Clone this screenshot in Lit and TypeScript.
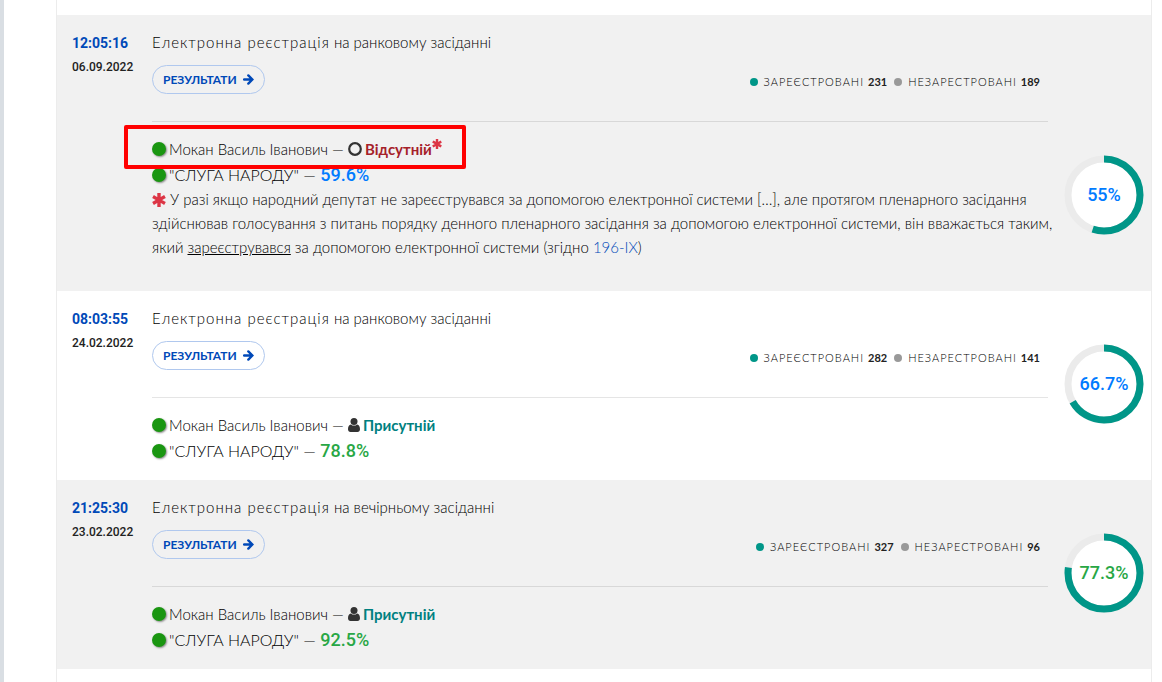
import { LitElement, html, css, svg, nothing } from "lit";
import { customElement, property } from "lit/decorators.js";

interface Session {
  time: string;
  date: string;
  when: string;
  registered: number;
  unregistered: number;
  present: boolean;
  faction: string;
  factionTone: "blue" | "green";
  total: number;
  totalTone: "blue" | "green";
  shaded: boolean;
}

const sessions: Session[] = [
  { time: "12:05:16", date: "06.09.2022", when: "на ранковому засіданні", registered: 231, unregistered: 189, present: false, faction: "59.6%", factionTone: "blue", total: 55, totalTone: "blue", shaded: true },
  { time: "08:03:55", date: "24.02.2022", when: "на ранковому засіданні", registered: 282, unregistered: 141, present: true, faction: "78.8%", factionTone: "green", total: 66.7, totalTone: "blue", shaded: false },
  { time: "21:25:30", date: "23.02.2022", when: "на вечірньому засіданні", registered: 327, unregistered: 96, present: true, faction: "92.5%", factionTone: "green", total: 77.3, totalTone: "green", shaded: true },
];

const asterisk = html`<svg class="asterisk" viewBox="0 0 14 14" aria-hidden="true">
  <path d="M7 1.8V12.2M2.5 4.4L11.5 9.6M11.5 4.4L2.5 9.6" fill="none" stroke="currentColor" stroke-width="3.4" stroke-linecap="square" />
</svg>`;

const arrow = html`<svg class="arrow" viewBox="0 0 12 12" aria-hidden="true">
  <path d="M1.2 6H9.6M5.8 1.6L10.2 6L5.8 10.4" fill="none" stroke="currentColor" stroke-width="2.6" stroke-linecap="round" />
</svg>`;

const person = html`<svg class="person" viewBox="0 0 12 14" aria-hidden="true">
  <circle cx="6" cy="3.6" r="3.5" />
  <path d="M2.9 6.4C1 6.7 0 8.6 0 11.3C0 12.9 1 14 2.5 14H9.5C11 14 12 12.9 12 11.3C12 8.6 11 6.7 9.1 6.4C7.4 8 4.6 8 2.9 6.4Z" />
</svg>`;

const ringIcon = html`<svg class="hollow" viewBox="0 0 14 14" aria-hidden="true">
  <circle cx="7" cy="7" r="5.8" fill="none" stroke="currentColor" stroke-width="2.2" />
</svg>`;

@customElement("percent-ring")
export class PercentRing extends LitElement {
  @property({ type: Number }) value = 0;
  @property() tone = "blue";

  static styles = css`
    :host { display: grid; width: 80px; height: 80px; place-items: center; }
    .dial, .label { grid-area: 1 / 1; }
    .dial { width: 80px; height: 80px; display: block; }
    .label { font: 500 18px/24px Roboto, sans-serif; color: #007bff; }
    .green { color: #28a745; }
  `;

  render() {
    const length = 2 * Math.PI * 36;
    return html`
      <svg class="dial" viewBox="0 0 80 80" aria-hidden="true">
        ${svg`
          <circle cx="40" cy="40" r="36" fill="#fff" stroke="#ebebeb" stroke-width="7" />
          <circle cx="40" cy="40" r="36" fill="none" stroke="#009688" stroke-width="7"
            stroke-dasharray="${(length * this.value) / 100} ${length}" transform="rotate(-90 40 40)" />`}
      </svg>
      <span class="label ${this.tone}">${this.value}%</span>
    `;
  }
}

@customElement("app-root")
export class AppRoot extends LitElement {
  static styles = css`
    :host {
      display: block;
      min-height: 100vh;
      box-sizing: border-box;
      padding: 0 10px 0 52px;
      border-left: 4px solid #d9dee3;
      background: #fff;
      color: #000;
      font-family: Lato, "Noto Sans", sans-serif;
      font-size: 15px;
      font-weight: 300;
      line-height: 24px;
    }
    b { font-weight: 700; }
    .panel {
      min-height: 100vh;
      box-sizing: border-box;
      padding-top: 15px;
      border: solid #ececec;
      border-width: 0 1px;
    }
    .session {
      display: grid;
      grid-template-columns: 64px minmax(0, 1fr) 80px;
      column-gap: 16px;
      padding: 15px 7px 17px 15px;
    }
    .shaded { background: #f1f1f1; }
    .when { padding-top: 1px; }
    .time { display: block; font: 700 14px/24px Roboto, sans-serif; color: #0049b8; text-decoration: none; }
    .date { display: block; font: 500 12px/24px Roboto, sans-serif; color: #222; }
    .title { margin: 0; font-size: 15px; font-weight: 300; }
    .spaced { letter-spacing: 1px; }
    .bar {
      display: flex;
      flex-wrap: wrap;
      align-items: center;
      justify-content: space-between;
      gap: 8px;
      margin-top: 11px;
      padding: 0 8px 27px 0;
      border-bottom: 1px solid rgba(0, 0, 0, 0.1);
    }
    .results {
      display: flex;
      align-items: center;
      gap: 6px;
      height: 29px;
      padding: 0 10px;
      border: 1px solid #b0c8ee;
      border-radius: 15px;
      background: transparent;
      color: #0049b8;
      font: 700 12px Lato, "Noto Sans", sans-serif;
      text-transform: uppercase;
      cursor: pointer;
    }
    .arrow { width: 11px; height: 11px; }
    .stats { display: flex; gap: 7px; margin: 4px 0 0; padding: 0; list-style: none; font-size: 11px; line-height: 16px; }
    .stat { display: flex; align-items: center; gap: 6px; text-transform: uppercase; letter-spacing: 1px; }
    .count { color: #222; letter-spacing: 0; }
    .dot { width: 8px; height: 8px; border-radius: 50%; background: #999; }
    .on { background: #009688; }
    .votes { margin: 14px 0 0; padding: 0; list-style: none; line-height: 26px; }
    .vote { position: relative; display: flex; align-items: center; white-space: pre; height: 26px; }
    .party { height: 25px; font-size: 16px; }
    .badge { width: 14px; height: 14px; margin-right: 3px; border-radius: 50%; background: #1a9611; box-shadow: 1px 1px 2px #888; }
    .absent { color: #a52029; }
    .present { color: #008080; }
    .person { width: 12px; height: 14px; margin-right: 3px; fill: #333; }
    .hollow { width: 14px; height: 14px; margin-right: 3px; color: #333; }
    .share { font: 500 18px/24px Roboto, sans-serif; }
    .blue { color: #007bff; }
    .green { color: #28a745; }
    .asterisk { width: 14px; height: 14px; color: #dc3545; vertical-align: -2px; }
    .mark { display: flex; height: 20px; }
    .mark .asterisk { width: 10px; height: 10px; }
    .note { margin: 0 -8px 15px 0; }
    .link { color: #0049b8; text-decoration: none; }
    .frame {
      position: absolute;
      z-index: 1;
      left: -28px;
      top: -11px;
      width: 342px;
      height: 44px;
      box-sizing: border-box;
      border: 4px solid #f00;
      border-radius: 2px;
      pointer-events: none;
    }
    .total { align-self: end; margin-bottom: 39px; }
  `;

  private row(s: Session) {
    return html`
      <article class="session ${s.shaded ? "shaded" : ""}">
        <div class="when">
          <a class="time" href="#">${s.time}</a>
          <time class="date">${s.date}</time>
        </div>
        <div>
          <h2 class="title"><span class="spaced">Електронна реєстрація</span> ${s.when}</h2>
          <div class="bar">
            <button class="results" type="button">Результати ${arrow}</button>
            <ul class="stats">
              <li class="stat"><i class="dot on"></i><span>Зареєстровані <b class="count">${s.registered}</b></span></li>
              <li class="stat"><i class="dot"></i><span>Незарестровані <b class="count">${s.unregistered}</b></span></li>
            </ul>
          </div>
          <ul class="votes">
            <li class="vote"><i class="badge"></i><span>Мокан Василь Іванович — </span>${s.present
              ? html`${person}<b class="present">Присутній</b>`
              : html`${ringIcon}<b class="absent">Відсутній</b><span class="mark">${asterisk}</span><span class="frame"></span>`}</li>
            <li class="vote party"><i class="badge"></i><span>"СЛУГА НАРОДУ" — </span><span class="share ${s.factionTone}">${s.faction}</span></li>
          </ul>
          ${s.present
            ? nothing
            : html`<p class="note">${asterisk} У разі якщо народний депутат не зареєструвався за допомогою електронної системи […], але протягом пленарного засідання здійснював голосування з питань порядку денного пленарного засідання за допомогою електронної системи, він вважається таким, який <u>зареєструвався</u> за допомогою електронної системи (згідно <a class="link" href="#">196-IX</a>)</p>`}
        </div>
        <percent-ring class="total" .value=${s.total} .tone=${s.totalTone}></percent-ring>
      </article>
    `;
  }

  render() {
    return html`<main class="panel">${sessions.map((s) => this.row(s))}</main>`;
  }
}
